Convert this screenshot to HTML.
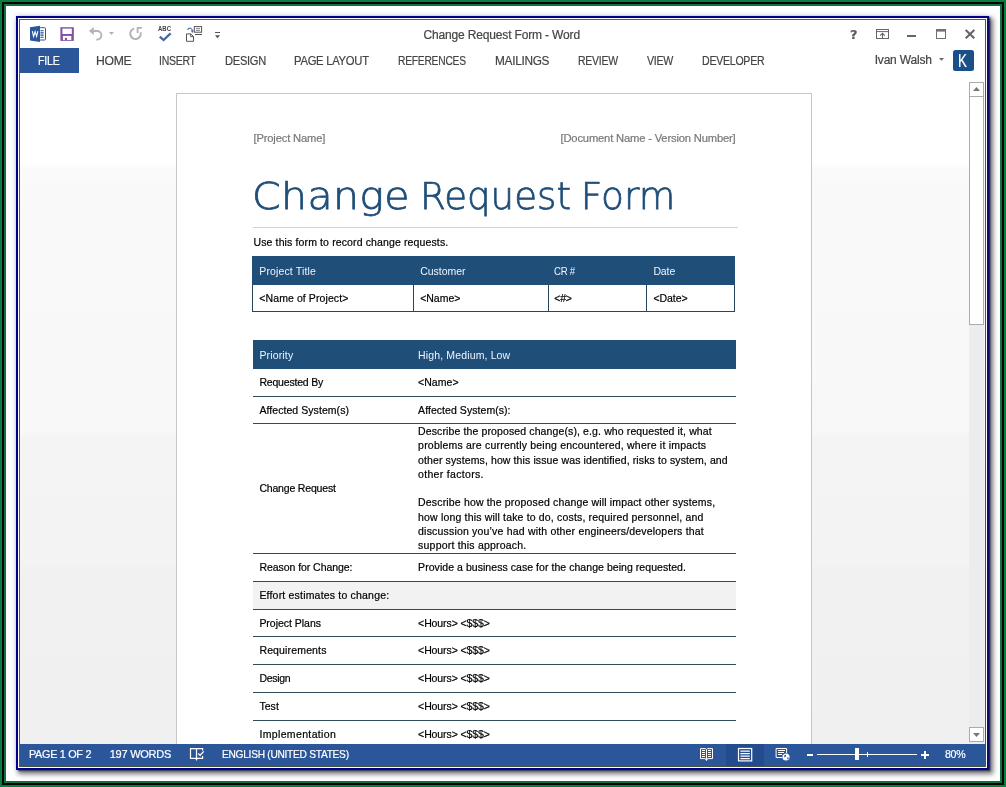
<!DOCTYPE html>
<html lang="en">
<head>
<meta charset="utf-8">
<title>Change Request Form - Word</title>
<style>
*{box-sizing:border-box;margin:0;padding:0}
html,body{width:1006px;height:787px;overflow:hidden;background:#fff}
body{font-family:"Liberation Sans",sans-serif;color:#000;position:relative}
.abs,.r,svg.i{position:absolute}
.t{position:absolute;white-space:nowrap;line-height:1;transform-origin:0 0;-webkit-text-stroke:0.2px currentColor}
#f1{left:0;top:0;width:1006px;height:787px;border:2px solid #04803f}
#f2{left:2px;top:2px;width:1002px;height:783px;border:2px solid #000}
#f3{left:4px;top:4px;width:998px;height:779px;border:2px solid #146f40}
#win{left:16px;top:16px;width:973px;height:754px;border:2px solid #00008b;background:#fff;border-right-color:#0e0e66;box-shadow:1.5px 1px 1.5px rgba(10,10,90,.75), 3px 3px 5px 1px rgba(0,0,0,.55), -2px -2px 4px rgba(120,120,255,.10)}
#win2{left:19px;top:19px;width:967px;height:748px;border:1px solid #56613a;border-right-color:#465666;border-bottom-color:#46583c}
#app{left:20px;top:20px;width:965px;height:746px;overflow:hidden;background:#fff}
#o{left:-20px;top:-20px;width:1006px;height:787px;will-change:transform}
#docbg{left:20px;top:73px;width:965px;height:671px;background:linear-gradient(#fff 0,#fff 90px,#fafafb 96px,#f9f9fa 130px,#f8f8f9 358px,#f4f4f5 364px,#f3f3f4 490px,#f1f1f1 497px,#f0f0f0 100%)}
#page{left:176px;top:93px;width:636px;height:700px;background:#fff;border:1px solid #c6c6c6}
.hl{height:1px;background:#2f4a5a;left:253px;width:483px}
</style>
</head>
<body>
<div class="abs" id="f1"></div><div class="abs" id="f2"></div><div class="abs" id="f3"></div>
<div class="abs" id="win"></div><div class="abs" id="win2"></div>
<div class="abs" id="app"><div class="abs" id="o">
<div class="abs" id="docbg"></div>
<div class="abs" id="page"></div>
<!-- ribbon -->
<div class="r" style="left:20px;top:48px;width:59px;height:25px;background:#2b579a"></div>
<!-- user avatar -->
<div class="r" style="left:952.5px;top:49.7px;width:21.6px;height:21.3px;background:#1b4f88;border-radius:2.5px"></div>
<!-- scrollbar -->
<div class="r" style="left:969px;top:82px;width:15px;height:662px;background:#ececee"></div>
<div class="r" style="left:969px;top:82px;width:15px;height:15px;background:#fff;border:1px solid #ababab"></div>
<div class="r" style="left:969px;top:96px;width:15px;height:229px;background:#fff;border:1px solid #ababab"></div>
<div class="r" style="left:969px;top:727px;width:15px;height:15px;background:#fff;border:1px solid #ababab"></div>
<svg class="i" style="left:973px;top:87px" width="7" height="4" viewBox="0 0 7 4"><path d="M0 4 L3.5 0 L7 4Z" fill="#777"/></svg>
<svg class="i" style="left:973px;top:733px" width="7" height="4" viewBox="0 0 7 4"><path d="M0 0 L3.5 4 L7 0Z" fill="#777"/></svg>
<!-- document -->
<div class="r" style="left:253px;top:227px;width:485px;height:1px;background:#d2d2d2"></div>
<!-- table 1 -->
<div class="r" style="left:252px;top:256px;width:483px;height:56px;border:1px solid #27465e;background:#fff"></div>
<div class="r" style="left:252px;top:256px;width:483px;height:29px;background:#1f4e79"></div>
<div class="r" style="left:413px;top:284px;width:1px;height:27px;background:#27465e"></div>
<div class="r" style="left:548px;top:284px;width:1px;height:27px;background:#27465e"></div>
<div class="r" style="left:646px;top:284px;width:1px;height:27px;background:#27465e"></div>
<!-- table 2 -->
<div class="r" style="left:253px;top:340px;width:483px;height:29px;background:#1f4e79"></div>
<div class="r" style="left:253px;top:582px;width:483px;height:27px;background:#f2f2f2"></div>
<div class="r hl" style="top:396px"></div>
<div class="r hl" style="top:423px"></div>
<div class="r hl" style="top:553px"></div>
<div class="r hl" style="top:581px"></div>
<div class="r hl" style="top:609px"></div>
<div class="r hl" style="top:636px"></div>
<div class="r hl" style="top:664px"></div>
<div class="r hl" style="top:692px"></div>
<div class="r hl" style="top:720px"></div>
<!-- status bar -->
<div class="r" style="left:20px;top:744px;width:966px;height:22px;background:#2b579a"></div>
<div class="r" style="left:726px;top:744px;width:38px;height:22px;background:#234c8e"></div>
<!-- Word icon -->
<svg class="i" style="left:29px;top:25px" width="18" height="18" viewBox="29 25 18 18">
<rect x="39.5" y="27.7" width="6" height="12.3" rx="0.8" fill="#fff" stroke="#2b579a" stroke-width="1"/>
<path d="M40.4 30.7h3.2M40.4 32.9h3.2M40.4 35.1h3.2M40.4 37.3h3.2" stroke="#24488a" stroke-width="1.1"/>
<path d="M30 27.3 L40 25.8 L40 41.9 L30 40.5Z" fill="#2b579a"/>
<path d="M32.3 31.2 L33.6 36.5 L35.1 31.6 L36.6 36.5 L37.9 31.2" fill="none" stroke="#fff" stroke-width="1.1" stroke-linejoin="miter"/>
</svg>
<!-- Save icon -->
<svg class="i" style="left:60px;top:27px" width="14" height="14" viewBox="60 27 14 14">
<rect x="60.4" y="27.2" width="13.4" height="13.7" fill="#80519e"/>
<rect x="62.4" y="28.6" width="9.4" height="5.4" fill="#fff"/>
<rect x="62.9" y="35.9" width="8.4" height="4.2" fill="#fff"/>
<rect x="64.9" y="37.9" width="2.1" height="2.2" fill="#80519e"/>
</svg>
<!-- Undo -->
<svg class="i" style="left:88px;top:26px" width="16" height="15" viewBox="88 26 16 15">
<path d="M92.5 31 H97.8 A4.3 4.3 0 0 1 96.4 39.5" fill="none" stroke="#b4b4b4" stroke-width="2" stroke-linecap="butt"/>
<path d="M88.9 30.9 L93.8 26.9 L93.8 35Z" fill="#b4b4b4"/>
</svg>
<svg class="i" style="left:109px;top:32px" width="5" height="3" viewBox="0 0 5 3"><path d="M0 0H5L2.5 2.8Z" fill="#b0b0b0"/></svg>
<!-- Redo -->
<svg class="i" style="left:128px;top:26px" width="16" height="15" viewBox="128 26 16 15">
<path d="M134.2 28.6 A5.3 5.3 0 1 0 140.6 32.2" fill="none" stroke="#b4b4b4" stroke-width="2"/>
<path d="M137.6 33 V27.8 H141.9" fill="none" stroke="#b4b4b4" stroke-width="1.8"/>
</svg>
<!-- ABC check -->
<svg class="i" style="left:157px;top:25px" width="16" height="17" viewBox="157 25 16 17">
<text x="158" y="30.9" font-family="Liberation Sans, sans-serif" font-size="6.4" font-weight="700" fill="#444" textLength="13" lengthAdjust="spacingAndGlyphs">ABC</text>
<path d="M159.8 36.6 L163.6 40 L170.6 33.4" fill="none" stroke="#4565a0" stroke-width="2.3"/>
</svg>
<!-- doc/box icon -->
<svg class="i" style="left:185px;top:25px" width="18" height="17" viewBox="185 25 18 17">
<path d="M186.5 33.9 H190.9 L193.5 36.5 V41.3 H186.5Z" fill="#fff" stroke="#555" stroke-width="1"/>
<path d="M190.7 34 V36.7 H193.3" fill="none" stroke="#555" stroke-width="1"/>
<rect x="194.3" y="26.6" width="7.3" height="5.6" fill="#fff" stroke="#555" stroke-width="1"/>
<path d="M196 28.6h4M196 30.4h4" stroke="#777" stroke-width="0.9"/>
<path d="M195 34.5h7" stroke="#555" stroke-width="1"/>
<path d="M187.6 30 Q188.4 27.9 190.6 28.2 Q192.5 28.7 192.4 31.3" fill="none" stroke="#4f6fa3" stroke-width="1.1"/>
<path d="M190.7 30.6 L192.4 32.9 L194 30.6Z" fill="#4f6fa3"/>
</svg>
<!-- QAT customize -->
<svg class="i" style="left:215px;top:32px" width="5" height="7" viewBox="0 0 5 7"><path d="M0 0.5H5" stroke="#555" stroke-width="1"/><path d="M0 3.3H5L2.5 6.2Z" fill="#555"/></svg>
<!-- ribbon display options -->
<svg class="i" style="left:876px;top:29px" width="13" height="10" viewBox="0 0 13 10">
<rect x="0.5" y="0.5" width="12" height="9" fill="#fff" stroke="#666" stroke-width="1"/>
<path d="M0.5 2.6H12.5" stroke="#666" stroke-width="1"/>
<path d="M6.5 4.4V9.5M4.2 6.7L6.5 4.4L8.8 6.7" fill="none" stroke="#666" stroke-width="1.1"/>
</svg>
<!-- minimize -->
<div class="r" style="left:907px;top:34.7px;width:9px;height:2.4px;background:#666"></div>
<!-- maximize -->
<svg class="i" style="left:936px;top:29px" width="11" height="10" viewBox="0 0 11 10">
<rect x="0.5" y="0.5" width="9" height="9" fill="#fff" stroke="#707070" stroke-width="1"/>
<path d="M0 1.3H10" stroke="#707070" stroke-width="2.6"/>
</svg>
<!-- close -->
<svg class="i" style="left:965px;top:29px" width="10" height="10" viewBox="0 0 10 10"><path d="M0.7 0.9L9.3 9.3M9.3 0.9L0.7 9.3" stroke="#666" stroke-width="2.1"/></svg>
<!-- user dropdown -->
<svg class="i" style="left:939px;top:58px" width="5" height="3" viewBox="0 0 5 3"><path d="M0 0H5L2.5 2.8Z" fill="#666"/></svg>
<!-- status: proofing icon -->
<svg class="i" style="left:189px;top:747px" width="16" height="16" viewBox="189 747 16 16">
<path d="M196.5 748.6 H190.5 V758.3 H196.5 M196.5 748.6 H202.6 V750.6 M202.6 756.1 V758.3 H196.5 M196.5 748.6 V759.5" fill="none" stroke="#fff" stroke-width="1.2"/>
<path d="M195.2 758.3 H197.8 L196.5 760.9Z" fill="#fff"/>
<path d="M198.2 753.5 L200.1 755.3 L203.8 751.4" fill="none" stroke="#fff" stroke-width="1.3"/>
</svg>
<!-- status: read mode -->
<svg class="i" style="left:699px;top:747px" width="15" height="15" viewBox="699 747 15 15">
<path d="M700.5 748.6 H705.4 L706.5 749.6 L707.6 748.6 H712.5 V758.6 H707.6 L706.5 760.6 L705.4 758.6 H700.5Z" fill="none" stroke="#fff" stroke-width="1"/>
<path d="M706.5 749.5V760" stroke="#fff" stroke-width="1"/>
<path d="M702 750.5h3M702 752.5h3M702 754.5h3M702 756.5h3M708 750.5h3M708 752.5h3M708 754.5h3M708 756.5h3" stroke="#fff" stroke-width="1"/>
</svg>
<!-- status: print layout -->
<svg class="i" style="left:737px;top:747px" width="16" height="15" viewBox="737 747 16 15">
<rect x="738.5" y="748.5" width="13.2" height="12.4" fill="none" stroke="#fff" stroke-width="1.2"/>
<path d="M740.4 751h9.4M740.4 753.5h9.4M740.4 756h9.4M740.4 758.5h9.4" stroke="#fff" stroke-width="1.25"/>
</svg>
<!-- status: web layout -->
<svg class="i" style="left:775px;top:747px" width="16" height="15" viewBox="775 747 16 15">
<path d="M782 757.5 H776.1 V748.5 H786.6 V753" fill="none" stroke="#fff" stroke-width="1"/>
<path d="M778 750.5h7M778 752.5h6M778 754.5h4" stroke="#fff" stroke-width="1"/>
<circle cx="786" cy="757" r="3.6" fill="#fff"/>
<path d="M784.2 755.5 q1.5 -1.5 2 0.3 q-0.6 1.6 -1.8 1.6z M787.4 757.4 q1.5 -0.4 1.3 1.3 q-1 1 -1.6 0.4z" fill="#2b579a"/>
</svg>
<!-- zoom slider -->
<div class="r" style="left:807px;top:753.8px;width:6.3px;height:2.5px;background:#fff"></div>
<div class="r" style="left:817px;top:754px;width:100px;height:1px;background:#fff"></div>
<div class="r" style="left:855px;top:748.4px;width:4.2px;height:12px;background:#fff"></div>
<div class="r" style="left:867px;top:751.8px;width:1px;height:5.6px;background:#fff"></div>
<div class="r" style="left:920.7px;top:753.7px;width:8.5px;height:2.2px;background:#fff"></div>
<div class="r" style="left:923.9px;top:750.8px;width:2.2px;height:8px;background:#fff"></div>

<span class="t" style="left:423.50px;top:28.74px;font-size:12px;color:#444;letter-spacing:-0.158px;">Change Request Form - Word</span>
<span class="t" style="left:38.44px;top:55.20px;font-size:12.4px;color:#fff;letter-spacing:-0.300px;transform:scaleX(0.8624);">FILE</span>
<span class="t" style="left:95.51px;top:55.20px;font-size:12.4px;color:#444;letter-spacing:-0.300px;transform:scaleX(0.9855);">HOME</span>
<span class="t" style="left:159.15px;top:55.20px;font-size:12.4px;color:#444;letter-spacing:-0.300px;transform:scaleX(0.8460);">INSERT</span>
<span class="t" style="left:225.10px;top:55.20px;font-size:12.4px;color:#444;letter-spacing:-0.300px;transform:scaleX(0.8966);">DESIGN</span>
<span class="t" style="left:294.09px;top:55.20px;font-size:12.4px;color:#444;letter-spacing:-0.300px;transform:scaleX(0.9081);">PAGE LAYOUT</span>
<span class="t" style="left:398.17px;top:55.20px;font-size:12.4px;color:#444;letter-spacing:-0.300px;transform:scaleX(0.8300);">REFERENCES</span>
<span class="t" style="left:494.55px;top:55.20px;font-size:12.4px;color:#444;letter-spacing:-0.300px;transform:scaleX(0.9544);">MAILINGS</span>
<span class="t" style="left:577.55px;top:55.20px;font-size:12.4px;color:#444;letter-spacing:-0.300px;transform:scaleX(0.8461);">REVIEW</span>
<span class="t" style="left:647.00px;top:55.20px;font-size:12.4px;color:#444;letter-spacing:-0.300px;transform:scaleX(0.8561);">VIEW</span>
<span class="t" style="left:702.15px;top:55.20px;font-size:12.4px;color:#444;letter-spacing:-0.300px;transform:scaleX(0.8536);">DEVELOPER</span>
<span class="t" style="left:874.70px;top:54.24px;font-size:12px;color:#444;letter-spacing:-0.193px;">Ivan Walsh</span>
<span class="t" style="left:958.17px;top:52.32px;font-size:18.4px;color:#fff;letter-spacing:-0.300px;transform:scaleX(0.7250);">K</span>
<span class="t" style="left:849.90px;top:28.73px;font-size:12.6px;color:#5c5c5c;font-weight:700;font-family:'DejaVu Sans',sans-serif;letter-spacing:0.200px;transform:scaleX(1.0286);">?</span>
<span class="t" style="left:28.50px;top:748.69px;font-size:11px;color:#fff;letter-spacing:-0.300px;transform:scaleX(0.9840);">PAGE 1 OF 2</span>
<span class="t" style="left:109.70px;top:748.69px;font-size:11px;color:#fff;letter-spacing:-0.242px;">197 WORDS</span>
<span class="t" style="left:221.50px;top:748.69px;font-size:11px;color:#fff;letter-spacing:-0.300px;transform:scaleX(0.9256);">ENGLISH (UNITED STATES)</span>
<span class="t" style="left:945.00px;top:748.69px;font-size:11px;color:#fff;letter-spacing:-0.300px;transform:scaleX(0.9614);">80%</span>
<span class="t" style="left:253.50px;top:132.72px;font-size:11.2px;color:#787878;letter-spacing:-0.168px;">[Project Name]</span>
<span class="t" style="left:560.50px;top:132.72px;font-size:11.2px;color:#787878;letter-spacing:-0.165px;">[Document Name - Version Number]</span>
<span class="t" style="left:251.51px;top:178.26px;font-size:37.5px;color:#1f4e79;font-weight:200;font-family:'DejaVu Sans Light','DejaVu Sans',sans-serif;letter-spacing:0.300px;transform:scaleX(1.0959);-webkit-text-stroke:0.75px #1f4e79;">Change</span>
<span class="t" style="left:420.24px;top:178.26px;font-size:37.5px;color:#1f4e79;font-weight:200;font-family:'DejaVu Sans Light','DejaVu Sans',sans-serif;transform:scaleX(0.9910);-webkit-text-stroke:0.75px #1f4e79;">Request</span>
<span class="t" style="left:580.81px;top:178.26px;font-size:37.5px;color:#1f4e79;font-weight:200;font-family:'DejaVu Sans Light','DejaVu Sans',sans-serif;-webkit-text-stroke:0.75px #1f4e79;">Form</span>
<span class="t" style="left:253.50px;top:236.91px;font-size:10.5px;color:#000;letter-spacing:0.129px;">Use this form to record change requests.</span>
<span class="t" style="left:259.30px;top:265.81px;font-size:10.5px;color:#fff;letter-spacing:0.133px;-webkit-text-stroke:0;color:#eef5ff;">Project Title</span>
<span class="t" style="left:420.20px;top:265.81px;font-size:10.5px;color:#fff;letter-spacing:-0.016px;-webkit-text-stroke:0;color:#eef5ff;">Customer</span>
<span class="t" style="left:554.30px;top:265.81px;font-size:10.5px;color:#fff;letter-spacing:-0.300px;transform:scaleX(0.9145);-webkit-text-stroke:0;color:#eef5ff;">CR #</span>
<span class="t" style="left:653.40px;top:265.81px;font-size:10.5px;color:#fff;letter-spacing:-0.113px;-webkit-text-stroke:0;color:#eef5ff;">Date</span>
<span class="t" style="left:259.30px;top:292.61px;font-size:10.5px;color:#000;letter-spacing:0.093px;">&lt;Name of Project&gt;</span>
<span class="t" style="left:420.20px;top:292.61px;font-size:10.5px;color:#000;letter-spacing:-0.028px;">&lt;Name&gt;</span>
<span class="t" style="left:554.30px;top:292.61px;font-size:10.5px;color:#000;letter-spacing:-0.286px;">&lt;#&gt;</span>
<span class="t" style="left:653.40px;top:292.61px;font-size:10.5px;color:#000;letter-spacing:-0.042px;">&lt;Date&gt;</span>
<span class="t" style="left:259.40px;top:349.81px;font-size:10.5px;color:#fff;letter-spacing:0.154px;-webkit-text-stroke:0;color:#eef5ff;">Priority</span>
<span class="t" style="left:418.10px;top:349.81px;font-size:10.5px;color:#fff;letter-spacing:0.138px;-webkit-text-stroke:0;color:#eef5ff;">High, Medium, Low</span>
<span class="t" style="left:259.40px;top:377.21px;font-size:10.5px;color:#000;letter-spacing:-0.183px;">Requested By</span>
<span class="t" style="left:418.10px;top:377.21px;font-size:10.5px;color:#000;letter-spacing:0.032px;">&lt;Name&gt;</span>
<span class="t" style="left:259.40px;top:405.01px;font-size:10.5px;color:#000;letter-spacing:0.064px;">Affected System(s)</span>
<span class="t" style="left:418.10px;top:405.01px;font-size:10.5px;color:#000;letter-spacing:0.055px;">Affected System(s):</span>
<span class="t" style="left:259.40px;top:482.61px;font-size:10.5px;color:#000;letter-spacing:-0.176px;">Change Request</span>
<span class="t" style="left:418.10px;top:425.91px;font-size:10.5px;color:#000;letter-spacing:0.119px;">Describe the proposed change(s), e.g. who requested it, what</span>
<span class="t" style="left:418.10px;top:440.21px;font-size:10.5px;color:#000;letter-spacing:0.209px;">problems are currently being encountered, where it impacts</span>
<span class="t" style="left:418.10px;top:454.51px;font-size:10.5px;color:#000;letter-spacing:0.112px;">other systems, how this issue was identified, risks to system, and</span>
<span class="t" style="left:418.10px;top:468.81px;font-size:10.5px;color:#000;letter-spacing:0.311px;">other factors.</span>
<span class="t" style="left:418.10px;top:497.41px;font-size:10.5px;color:#000;letter-spacing:0.160px;">Describe how the proposed change will impact other systems,</span>
<span class="t" style="left:418.10px;top:511.71px;font-size:10.5px;color:#000;letter-spacing:0.171px;">how long this will take to do, costs, required personnel, and</span>
<span class="t" style="left:418.10px;top:526.01px;font-size:10.5px;color:#000;letter-spacing:0.188px;">discussion you’ve had with other engineers/developers that</span>
<span class="t" style="left:418.10px;top:540.31px;font-size:10.5px;color:#000;letter-spacing:0.201px;">support this approach.</span>
<span class="t" style="left:259.40px;top:561.71px;font-size:10.5px;color:#000;letter-spacing:-0.051px;">Reason for Change:</span>
<span class="t" style="left:418.10px;top:561.71px;font-size:10.5px;color:#000;letter-spacing:0.052px;">Provide a business case for the change being requested.</span>
<span class="t" style="left:259.40px;top:589.61px;font-size:10.5px;color:#000;letter-spacing:0.193px;">Effort estimates to change:</span>
<span class="t" style="left:259.40px;top:617.71px;font-size:10.5px;color:#000;letter-spacing:-0.026px;">Project Plans</span>
<span class="t" style="left:418.10px;top:617.71px;font-size:10.5px;color:#000;letter-spacing:-0.095px;">&lt;Hours&gt; &lt;$$$&gt;</span>
<span class="t" style="left:259.40px;top:644.91px;font-size:10.5px;color:#000;letter-spacing:0.153px;">Requirements</span>
<span class="t" style="left:418.10px;top:644.91px;font-size:10.5px;color:#000;letter-spacing:-0.095px;">&lt;Hours&gt; &lt;$$$&gt;</span>
<span class="t" style="left:259.40px;top:672.71px;font-size:10.5px;color:#000;letter-spacing:-0.300px;">Design</span>
<span class="t" style="left:418.10px;top:672.71px;font-size:10.5px;color:#000;letter-spacing:-0.095px;">&lt;Hours&gt; &lt;$$$&gt;</span>
<span class="t" style="left:259.40px;top:700.51px;font-size:10.5px;color:#000;letter-spacing:0.053px;">Test</span>
<span class="t" style="left:418.10px;top:700.51px;font-size:10.5px;color:#000;letter-spacing:-0.095px;">&lt;Hours&gt; &lt;$$$&gt;</span>
<span class="t" style="left:259.40px;top:729.21px;font-size:10.5px;color:#000;letter-spacing:0.358px;">Implementation</span>
<span class="t" style="left:418.10px;top:729.21px;font-size:10.5px;color:#000;letter-spacing:-0.095px;">&lt;Hours&gt; &lt;$$$&gt;</span>
</div></div>
</body>
</html>
